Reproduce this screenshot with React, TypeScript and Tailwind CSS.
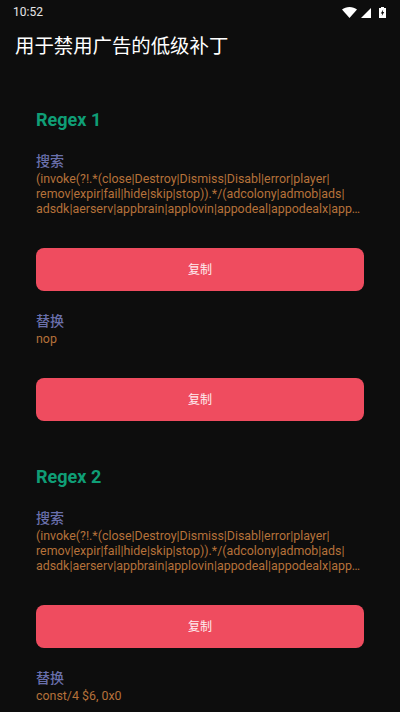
const regexLines = [
  "(invoke(?!.*(close|Destroy|Dismiss|Disabl|error|player|",
  "remov|expir|fail|hide|skip|stop)).*/(adcolony|admob|ads|",
  "adsdk|aerserv|appbrain|applovin|appodeal|appodealx|appnext|appsflyer|chartboost|facebook|flurry|fyber|inmobi|ironsource|mopub|startapp|tapjoy|unity|vungle)",
];

function Section({ title, lines }: { title: string; lines: string[] }) {
  return (
    <div>
      <div className="text-[14px] leading-[20px] font-medium text-[#6a70ac]">{title}</div>
      {lines.map((line) => (
        <div key={line} className="text-[12.4px] leading-[15px] text-[#b5713a] truncate">{line}</div>
      ))}
    </div>
  );
}

function CopyButton() {
  return (
    <button className="w-full h-[43px] rounded-[8px] bg-[#ef4c5f] text-white/90 text-[12px] flex items-center justify-center">复制</button>
  );
}

function Card({ name, replace }: { name: string; replace: string }) {
  return (
    <div className="flex flex-col">
      <div className="text-[18px] leading-[22px] font-bold text-[#0f9e76] mb-[20px]">{name}</div>
      <Section title="搜索" lines={regexLines} />
      <div className="mt-[32px]"><CopyButton /></div>
      <div className="mt-[20px]"><Section title="替换" lines={[replace]} /></div>
      <div className="mt-[32px]"><CopyButton /></div>
    </div>
  );
}

export default function App() {
  return (
    <div className="w-[400px] h-[712px] overflow-hidden bg-[#0d0d0d] flex flex-col font-['Roboto','Noto_Sans_CJK_SC',sans-serif]">
      <div className="h-[24px] shrink-0 flex items-center justify-between pl-[13px] pr-[14px] text-white/90 text-[12px]">
        <span>10:52</span>
        <div className="flex items-center gap-[3px]">
          <svg width="15" height="11" viewBox="0 0 15 11"><path d="M0 2.5C2 .9 4.6 0 7.5 0s5.5.9 7.5 2.5L7.5 11z" fill="#fff" /></svg>
          <svg width="11" height="11" viewBox="0 0 11 11" className="ml-[1px]"><path d="M10 1v10H0z" fill="#fff" /></svg>
          <svg width="7" height="11" viewBox="0 0 7 11" className="ml-[4px]"><path fillRule="evenodd" d="M2 0h3v1h2v10H0V1h2zM4.2 2.5 1.8 6.4h1.4L2.8 9l2.4-3.9H3.8z" fill="#fff" /></svg>
        </div>
      </div>
      <div className="h-[46px] shrink-0 flex items-center pl-[15px] text-[19.4px] text-white">用于禁用广告的低级补丁</div>
      <div className="flex flex-col gap-[45px] px-[36px] pt-[39px]">
        <Card name="Regex 1" replace="nop" />
        <Card name="Regex 2" replace="const/4 $6, 0x0" />
      </div>
    </div>
  );
}
